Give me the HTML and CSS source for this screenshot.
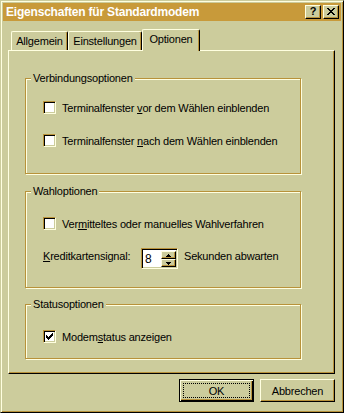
FILE: index.html
```html
<!DOCTYPE html>
<html lang="de">
<head>
<meta charset="utf-8">
<title>Eigenschaften für Standardmodem</title>
<link rel="stylesheet" href="styles.css">
</head>
<body>
<div class="window">
  <div class="titlebar">
    <span class="title">Eigenschaften für Standardmodem</span>
    <div class="tbtns">
      <span class="tbtn help">?</span>
      <span class="tbtn close"><svg width="8" height="7" viewBox="0 0 8 7" shape-rendering="crispEdges"><path d="M0 0h2v1h-2zM6 0h2v1h-2zM1 1h2v1h-2zM5 1h2v1h-2zM2 2h4v1h-4zM3 3h2v1h-2zM2 4h4v1h-4zM1 5h2v1h-2zM5 5h2v1h-2zM0 6h2v1h-2zM6 6h2v1h-2z" fill="#000"/></svg></span>
    </div>
  </div>
  <div class="client">
    <div class="tabs">
      <div class="tab t1">Allgemein</div>
      <div class="tab t2">Einstellungen</div>
      <div class="tab t3 active">Optionen</div>
    </div>
    <div class="panel">
      <div class="group g1">
        <div class="legend">Verbindungsoptionen</div>
        <div class="row r1"><span class="box"></span><span class="lbl">Terminalfenster <u>v</u>or dem Wählen einblenden</span></div>
        <div class="row r2"><span class="box"></span><span class="lbl">Terminalfenster <u>n</u>ach dem Wählen einblenden</span></div>
      </div>
      <div class="group g2">
        <div class="legend">Wahloptionen</div>
        <div class="row r3"><span class="box"></span><span class="lbl">Ver<u>m</u>itteltes oder manuelles Wahlverfahren</span></div>
        <div class="row spinrow">
          <span class="klabel"><u>K</u>reditkartensignal:</span>
          <span class="spin">
            <span class="spinval">8</span>
            <span class="spinbtns">
              <span class="sbtn up"><svg width="5" height="3" viewBox="0 0 5 3" shape-rendering="crispEdges"><path d="M2 0h1v1h-1zM1 1h3v1h-3zM0 2h5v1h-5z" fill="#000"/></svg></span>
              <span class="sbtn down"><svg width="5" height="3" viewBox="0 0 5 3" shape-rendering="crispEdges"><path d="M0 0h5v1h-5zM1 1h3v1h-3zM2 2h1v1h-1z" fill="#000"/></svg></span>
            </span>
          </span>
          <span class="after">Sekunden abwarten</span>
        </div>
      </div>
      <div class="group g3">
        <div class="legend">Statusoptionen</div>
        <div class="row r4"><span class="box checked"><svg width="7" height="7" viewBox="0 0 7 7" shape-rendering="crispEdges"><path d="M6 0h1v1h-1zM5 1h2v1h-2zM0 2h1v1h-1zM4 2h3v1h-3zM0 3h2v1h-2zM3 3h3v1h-3zM0 4h5v1h-5zM1 5h3v1h-3zM2 6h1v1h-1z" fill="#000"/></svg></span><span class="lbl">Modem<u>s</u>tatus anzeigen</span></div>
      </div>
    </div>
    <div class="buttons">
      <div class="btn default"><span class="focus">OK</span></div>
      <div class="btn">Abbrechen</div>
    </div>
  </div>
</div>
</body>
</html>
```
FILE: styles.css
```css
:root {
  --face: #cccc9c;
  --hl: #ffffe0;
  --sh: #b8923a;
  --dk: #000000;
  --title: #c89a3a;
}
* { box-sizing: border-box; }
html, body { margin: 0; padding: 0; }
body {
  width: 344px;
  height: 413px;
  background: var(--face);
  font-family: "Liberation Sans", Arial, sans-serif;
  font-size: 11px;
  letter-spacing: -0.2px;
  line-height: 13px;
  color: #000;
  overflow: hidden;
}
u { text-decoration: underline; text-underline-offset: 1px; }

.window {
  width: 344px;
  height: 413px;
  border: 1px solid;
  border-color: var(--face) var(--dk) var(--dk) var(--face);
  box-shadow: inset 1px 1px 0 var(--hl), inset -1px -1px 0 var(--sh);
  padding: 2px;
  background: var(--face);
  display: flex;
  flex-direction: column;
}

.titlebar {
  height: 18px;
  background: var(--title);
  display: flex;
  align-items: center;
  padding-left: 3px;
  flex-shrink: 0;
}
.title {
  color: #fff;
  font-weight: bold;
  font-size: 12px;
  letter-spacing: -0.2px;
  white-space: nowrap;
}
.tbtns {
  margin-left: auto;
  margin-right: 2px;
  display: flex;
  gap: 2px;
}
.tbtn {
  width: 16px;
  height: 14px;
  background: var(--face);
  border: 1px solid;
  border-color: var(--hl) var(--dk) var(--dk) var(--hl);
  box-shadow: inset -1px -1px 0 var(--sh);
  display: flex;
  align-items: center;
  justify-content: center;
}
.help {
  font-weight: bold;
  font-size: 11px;
  line-height: 11px;
  letter-spacing: 0;
  padding-bottom: 1px;
}
.close svg { display: block; margin-bottom: 1px; }

.client {
  flex: 1;
  padding: 0 5px;
  display: flex;
  flex-direction: column;
}

.tabs {
  height: 29px;
  display: flex;
  align-items: flex-end;
  padding-left: 3px;
  flex-shrink: 0;
  position: relative;
  z-index: 1;
}
.tab {
  height: 19px;
  background: var(--face);
  border-top: 1px solid var(--hl);
  border-left: 1px solid var(--hl);
  border-right: 1px solid var(--dk);
  box-shadow: inset -1px 0 0 var(--sh);
  border-radius: 2px 2px 0 0;
  padding-top: 3px;
  text-align: center;
  white-space: nowrap;
}
.t1 { width: 57px; }
.t2 { width: 74px; }
.t3 { width: 58px; }
.tab.active {
  height: 22px;
  margin-bottom: -1px;
  margin-left: 0;
}

.panel {
  width: 327px;
  height: 324px;
  border: 1px solid;
  border-color: var(--hl) var(--dk) var(--dk) var(--hl);
  box-shadow: inset -1px -1px 0 var(--sh);
  display: flex;
  flex-direction: column;
  padding-left: 16px;
}

.group {
  width: 276px;
  border: 1px solid var(--sh);
  box-shadow: inset 1px 1px 0 var(--hl), 1px 1px 0 var(--hl);
  padding-left: 17px;
  flex-shrink: 0;
}
.g1 { height: 96px; margin-top: 27px; }
.g2 { height: 97px; margin-top: 17px; }
.g3 { height: 55px; margin-top: 16px; }

.legend {
  width: max-content;
  margin: -7px 0 -6px -12px;
  padding: 0 2px;
  background: var(--face);
  height: 13px;
}

.row {
  display: flex;
  align-items: center;
  height: 13px;
  white-space: nowrap;
}
.r1 { margin-top: 22px; }
.r2 { margin-top: 20px; }
.r3 { margin-top: 25px; }
.r4 { margin-top: 25px; }

.box {
  width: 13px;
  height: 13px;
  background: #fff;
  border: 1px solid;
  border-color: var(--sh) var(--hl) var(--hl) var(--sh);
  box-shadow: inset 1px 1px 0 var(--dk), inset -1px -1px 0 var(--face);
  flex-shrink: 0;
  display: flex;
  padding: 2px 0 0 2px;
}
.box svg { display: block; }
.lbl { margin-left: 6px; padding-top: 1px; }

.spinrow {
  height: 21px;
  margin-top: 18px;
  align-items: flex-start;
}
.klabel { width: 98px; padding-top: 2px; }
.spin {
  width: 37px;
  height: 21px;
  background: #fff;
  border: 1px solid;
  border-color: var(--sh) var(--hl) var(--hl) var(--sh);
  box-shadow: inset 1px 1px 0 var(--dk), inset -1px -1px 0 var(--face);
  padding: 2px 1px 1px 2px;
  display: flex;
}
.spinval {
  flex: 1;
  font-size: 12px;
  padding-left: 1px;
  padding-top: 2px;
  line-height: 13px;
}
.spinbtns {
  width: 15px;
  display: flex;
  flex-direction: column;
}
.sbtn {
  flex: 1;
  background: var(--face);
  border: 1px solid;
  border-color: var(--hl) var(--dk) var(--dk) var(--hl);
  box-shadow: inset -1px -1px 0 var(--sh);
  display: flex;
  align-items: center;
  justify-content: center;
}
.sbtn svg { display: block; }
.after { margin-left: 6px; padding-top: 2px; }

.buttons {
  display: flex;
  justify-content: flex-end;
  gap: 6px;
  margin-top: 5px;
  padding-right: 1px;
}
.btn {
  width: 75px;
  height: 23px;
  background: var(--face);
  border: 1px solid;
  border-color: var(--hl) var(--dk) var(--dk) var(--hl);
  box-shadow: inset -1px -1px 0 var(--sh);
  display: flex;
  align-items: center;
  justify-content: center;
  padding-top: 1px;
}
.btn.default {
  border-color: var(--dk);
  box-shadow: inset 1px 1px 0 var(--hl), inset -1px -1px 0 var(--dk), inset -2px -2px 0 var(--sh);
  padding: 3px;
  align-items: stretch;
}
.focus {
  flex: 1;
  border: 1px dotted var(--dk);
  display: flex;
  align-items: center;
  justify-content: center;
  padding-top: 1px;
}
```
